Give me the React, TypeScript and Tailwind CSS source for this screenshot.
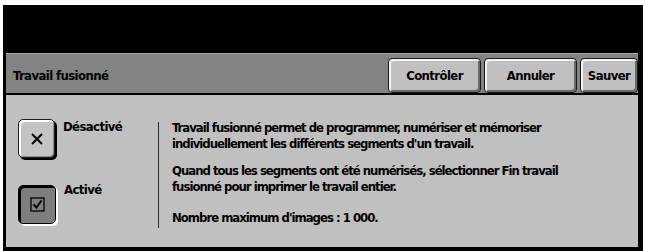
const font = "font-['Liberation_Sans_Narrow','DejaVu_Sans_Condensed','Liberation_Sans',sans-serif]";

const headerButtons = [
  { label: "Contrôler", width: "w-[93px]" },
  { label: "Annuler", width: "w-[93px]" },
  { label: "Sauver", width: "w-[58px]" },
];

function XIcon() {
  return (
    <svg width="14" height="14" viewBox="0 0 14 14">
      <path d="M2 2 L12 12 M12 2 L2 12" stroke="#000" strokeWidth="2" fill="none" />
    </svg>
  );
}

function CheckIcon() {
  return (
    <svg width="15" height="15" viewBox="0 0 15 15">
      <rect x="1" y="1" width="13" height="13" fill="none" stroke="#000" strokeWidth="1.3" />
      <path d="M3.5 7.5 L6.5 10.5 L11.5 3.5" stroke="#000" strokeWidth="2" fill="none" />
    </svg>
  );
}

export default function App() {
  return (
    <div className={`h-[251px] w-[645px] overflow-hidden bg-white pt-[5px] pl-[3px] ${font} tracking-[-0.6px]`}>
      <div className="flex h-[246px] w-[640px] flex-col bg-black pb-[4px] pl-[3px] pr-[5px]">
        <div className="h-[48px] shrink-0" />

        {/* header bar */}
        <div className="flex h-[42px] shrink-0 items-start border-t border-[#a8a8a8] border-b-2 border-b-black bg-[#838383]">
          <span className="flex-1 pl-[7px] pt-[15px] text-[13px] font-bold leading-none text-black">
            Travail fusionné
          </span>
          <div className="flex gap-[3px] pt-[4px]">
            {headerButtons.map((b) => (
              <button
                key={b.label}
                className={`${b.width} flex h-[35px] items-center justify-center rounded-[4px] border border-[#1a1a1a] bg-[#c0c0c0] text-[13px] font-bold text-black shadow-[inset_2px_2px_0_#f4f4f4,inset_-2px_-2px_0_#6a6a6a]`}
              >
                {b.label}
              </button>
            ))}
          </div>
        </div>

        {/* content */}
        <div className="flex flex-1 bg-[#c0c0c0] text-black">
          <div className="flex w-[152px] shrink-0 flex-col gap-[27px] pl-[12px] pt-[24px]">
            <div className="flex items-start gap-[8px]">
              <div className="flex h-[39px] w-[37px] items-center justify-center rounded-[5px] border border-[#202020] bg-[#c4c4c4] shadow-[inset_2px_2px_0_#fff,inset_-1px_-1px_0_#8a8a8a,2px_2px_0_#000]">
                <XIcon />
              </div>
              <span className="pt-[1px] text-[13px] font-bold leading-none">Désactivé</span>
            </div>
            <div className="flex items-start gap-[8px]">
              <div className="flex h-[39px] w-[38px] items-center justify-center rounded-[5px] border border-black bg-[#7e7e7e] shadow-[inset_2px_2px_0_#000,2px_2px_0_#fff]">
                <CheckIcon />
              </div>
              <span className="-mt-[2px] text-[13px] font-bold leading-none">Activé</span>
            </div>
          </div>

          <div className="mt-[27px] h-[106px] w-px shrink-0 bg-[#2a2a2a]" />

          <div className="flex flex-col pl-[13px] pt-[25px] text-[13px] font-bold leading-[15.5px] tracking-[-1px]">
            <p>
              Travail fusionné permet de programmer, numériser et mémoriser
              <br />
              individuellement les différents segments d'un travail.
            </p>
            <p className="mt-[12px]">
              Quand tous les segments ont été numérisés, sélectionner Fin travail
              <br />
              fusionné pour imprimer le travail entier.
            </p>
            <p className="mt-[16px]">Nombre maximum d'images : 1 000.</p>
          </div>
        </div>
      </div>
    </div>
  );
}
